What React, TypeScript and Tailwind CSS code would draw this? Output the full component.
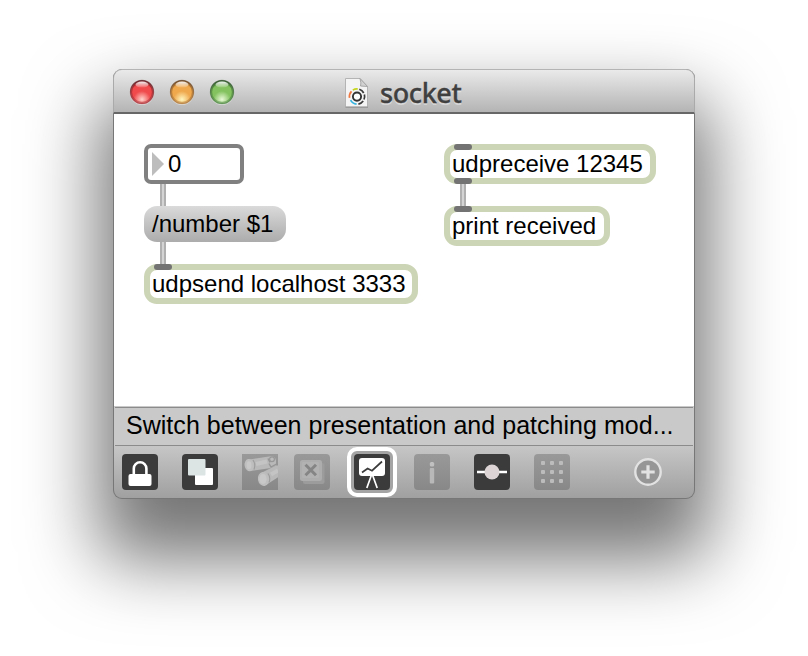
import type { ReactNode } from "react";

function Light({ id, dark, mid, light, rim }: { id: string; dark: string; mid: string; light: string; rim: string }) {
  return (
    <svg className="size-[26px]" viewBox="0 0 26 26">
      <defs>
        <radialGradient id={id} cx=".5" cy=".84" r=".8">
          <stop offset="0" stopColor={light} />
          <stop offset=".48" stopColor={mid} />
          <stop offset=".8" stopColor={mid} />
          <stop offset="1" stopColor={dark} />
        </radialGradient>
        <linearGradient id={id + "Shine"} x1="0" y1="0" x2="0" y2="1">
          <stop offset="0" stopColor="#fff" stopOpacity=".95" />
          <stop offset="1" stopColor="#fff" stopOpacity=".1" />
        </linearGradient>
        <linearGradient id={id + "Rim"} x1="0" y1="0" x2="0" y2="1">
          <stop offset="0" stopColor={rim} />
          <stop offset="1" stopColor={dark} />
        </linearGradient>
      </defs>
      <circle cx="13" cy="14" r="12" fill="#e4e4e4" opacity=".8" />
      <circle cx="13" cy="13" r="11" fill={"url(#" + id + ")"} stroke={"url(#" + id + "Rim)"} strokeOpacity=".45" strokeWidth="2.4" />
      <circle cx="13" cy="13" r="11.4" fill="none" stroke={"url(#" + id + "Rim)"} strokeOpacity=".7" strokeWidth="1.1" />
      <ellipse cx="13" cy="5.6" rx="6.4" ry="3" fill={"url(#" + id + "Shine)"} />
    </svg>
  );
}

function DocumentIcon() {
  return (
    <svg className="h-[32px] w-[24px]" viewBox="0 0 24 32">
      <path d="M.5 1.5H15l7.5 8v20.5H.5z" fill="#f4f4f4" stroke="#b4b4b4" />
      <path d="M.5 30.2h22.5" stroke="#8e8e8e" />
      <path d="M15 1.5q1.5 5 .5 7.5l7 .5z" fill="#d2d2d2" stroke="#a0a0a0" strokeWidth=".9" />
      <circle cx="12" cy="19.6" r="4.1" fill="#fff" stroke="#333" strokeWidth="1.9" />
      <g fill="none" strokeWidth="1.7">
        <path d="M7.8 13.1a7.6 7.6 0 0 1 5-1.1" stroke="#c4d51c" />
        <path d="M14.3 12.3a7.6 7.6 0 0 1 4.4 3.7M19.4 17.5a7.6 7.6 0 0 1-.4 5M18.2 24a7.6 7.6 0 0 1-4.8 3.1" stroke="#3a3a3a" />
        <path d="M11.6 27.2a7.6 7.6 0 0 1-6-4" stroke="#34b4e0" />
        <path d="M4.5 20.9a7.6 7.6 0 0 1 2-6.6" stroke="#f07840" />
      </g>
    </svg>
  );
}

function ObjectBox({ className, children, outlet }: { className: string; children: ReactNode; outlet?: boolean }) {
  return (
    <div className={"absolute h-[40px] rounded-[13px] border-6 border-[#ccd5b5] bg-white pl-[2px] leading-[28px] " + className}>
      <i className="absolute -top-[6px] left-[4px] h-[6px] w-[18px] rounded-[3px] bg-[#737373]" />
      {children}
      {outlet && <i className="absolute -bottom-[6px] left-[4px] h-[6px] w-[18px] rounded-[3px] bg-[#737373]" />}
    </div>
  );
}

function Cord({ className }: { className: string }) {
  return <div className={"absolute w-[6px] border-x-2 border-[#b0b0b0] bg-[#d4d4d4] " + className} />;
}

function Tile({ className, children }: { className: string; children: ReactNode }) {
  return (
    <button className={"size-[36px] shrink-0 overflow-hidden rounded-[4px] " + className}>
      <svg className="size-[36px]" viewBox="0 0 36 36" fill="none">{children}</svg>
    </button>
  );
}

const active = "bg-[#3b3b3b]";
const muted = "bg-linear-to-b from-[#999] to-[#888]";

export default function App() {
  return (
    <div className="h-[656px] w-[808px] overflow-hidden bg-white pt-[69px] pl-[113px] font-['Liberation_Sans',Arial,sans-serif] text-[24px] text-black">
      <div className="flex h-[430px] w-[582px] flex-col rounded-t-[9px] rounded-b-[9px] bg-[#777] p-px shadow-[0_46px_72px_15px_rgba(0,0,0,0.54)]">
        <header className="-mx-px -mt-px flex h-[45px] shrink-0 items-center rounded-t-[9px] border-x border-t border-b-2 border-x-[#aaa] border-t-[#b4b4b4] border-b-[#676767] bg-linear-to-b from-[#eaeaea] to-[#b4b4b4] pl-[15px]">
          <div className="flex gap-[14px] pt-[1px]">
            <Light id="red" dark="#b02a30" mid="#f04a4c" light="#ffd4cd" rim="#551016" />
            <Light id="amber" dark="#b4762e" mid="#efa84c" light="#fff6be" rim="#603814" />
            <Light id="green" dark="#4a883c" mid="#83c25f" light="#eaf9d8" rim="#22481c" />
          </div>
          <div className="ml-[110px] flex items-center">
            <div className="pt-[3px]">
              <DocumentIcon />
            </div>
            <h1 className="ml-[11px] pt-[3px] font-['Noto_Sans',sans-serif] text-[27px] leading-[38px] font-medium tracking-[-0.4px] text-[#404040] [-webkit-text-stroke:0.3px_#404040] [text-shadow:0_2px_0_rgba(255,255,255,0.4)]">socket</h1>
          </div>
        </header>

        <main className="relative h-[292px] shrink-0 bg-white">
          <Cord className="top-[70px] left-[46px] h-[22px]" />
          <Cord className="top-[128px] left-[46px] h-[23px]" />
          <Cord className="top-[70px] left-[346px] h-[23px]" />
          <div className="absolute top-[30px] left-[30px] flex h-[40px] w-[100px] items-center rounded-[7px] border-4 border-[#808080] bg-white pl-[4px]">
            <svg className="h-[24px] w-[12px]" viewBox="0 0 12 24"><path d="M0 0l12 12L0 24z" fill="#bdbdbd" /></svg>
            <span className="ml-[4px]">0</span>
          </div>
          <div className="absolute top-[92px] left-[30px] h-[36px] w-[142px] rounded-[13px] bg-linear-to-b from-[#dadada] to-[#acacac] pl-[8px] leading-[36px]">/number $1</div>
          <ObjectBox className="top-[150px] left-[30px] w-[274px]">udpsend localhost 3333</ObjectBox>
          <ObjectBox className="top-[30px] left-[330px] w-[212px]" outlet>udpreceive 12345</ObjectBox>
          <ObjectBox className="top-[92px] left-[330px] w-[166px]">print received</ObjectBox>
        </main>

        <div className="h-[40px] shrink-0 border-t border-[#c9c9c9] bg-[#c9c9c9]">
          <div className="mx-px h-[39px] border-y border-[#8b8b8b] pl-[11px] text-[25px] leading-[35px] tracking-[0.03px] whitespace-nowrap">
            Switch between presentation and patching mod...
          </div>
        </div>

        <footer className="flex h-[52px] shrink-0 items-center rounded-b-[8px] bg-linear-to-b from-[#c6c6c6] to-[#a0a0a0] pl-[8px]">
          <Tile className={active}>
            <rect x="6.5" y="20" width="23" height="12" rx="2" fill="#fff" />
            <path d="M11.8 21v-6.5a6.3 6.3 0 0 1 12.6 0V21" stroke="#fff" strokeWidth="2.6" />
          </Tile>
          <Tile className={"ml-[24px] " + active}>
            <rect x="13" y="14" width="18" height="17" rx="1" fill="#fff" />
            <rect x="6" y="5" width="17.5" height="16.5" rx="1" fill="#dde4e4" />
          </Tile>
          <Tile className={"ml-[24px] rounded-none " + muted}>
            <path d="M7 5.5L27 2.5q6-1 7 4v5l-5 2.5L8 17z" fill="#b9b9b9" />
            <path d="M20 18.5L34 11.5l3 0v11L24 31z" fill="#b9b9b9" />
            <ellipse cx="7.2" cy="11.2" rx="4.6" ry="6.2" fill="#bebebe" transform="rotate(-10 7.2 11.2)" />
            <ellipse cx="21.5" cy="25" rx="5.6" ry="7" fill="#bebebe" transform="rotate(-10 21.5 25)" />
            <ellipse cx="7" cy="11.2" rx="2.4" ry="4" fill="#c8c8c8" />
            <ellipse cx="21" cy="25" rx="3.6" ry="5" fill="#c8c8c8" />
            <path d="M11 6q3 4 1 9.5M26 19.5q3 4 1 9" stroke="#9c9c9c" strokeWidth="1.1" />
            <path d="M14 10l11-2.5M29 20.5l7-4" stroke="#c4c4c4" strokeWidth="4" />
            <circle cx="30" cy="5.2" r="2.4" fill="#bcbcbc" stroke="#979797" strokeWidth="1.2" />
            <path d="M27 9.5l2 3.5 5.5-3M26 4.5l2 4" stroke="#969696" strokeWidth="1.4" />
          </Tile>
          <Tile className={"ml-[16px] " + muted}>
            <rect x="9" y="9" width="21.5" height="21" rx="2" fill="#9c9c9c" />
            <rect x="6" y="6" width="22" height="21" rx="2.5" fill="#adadad" />
            <rect x="8" y="8" width="17" height="16" rx="1" fill="#b2b2b2" />
            <path d="M11.5 10.8l10.5 10.4m0-10.4l-10.5 10.4" stroke="#858585" strokeWidth="3" />
          </Tile>
          <div className="ml-[17px] flex h-[50px] w-[50px] shrink-0 items-center justify-center rounded-[10px] border-4 border-white bg-[#a4a4a4]">
            <Tile className={active}>
              <rect x="5" y="4" width="26" height="18" rx="3" fill="#fff" />
              <path d="M8 18.5l5.6-4 4.4 2.2L28 7.5" stroke="#3b3b3b" strokeWidth="1.7" />
              <path d="M17.3 21.5l-4.5 12.5M18.7 21.5l4.5 12.5" stroke="#fff" strokeWidth="1.7" />
            </Tile>
          </div>
          <Tile className={"ml-[17px] " + muted}>
            <rect x="15.8" y="8" width="4.4" height="4.4" rx="1.5" fill="#c0c0c0" />
            <rect x="15.8" y="14" width="4.4" height="15.5" rx="1" fill="#b8b8b8" />
          </Tile>
          <Tile className={"ml-[24px] " + active}>
            <path d="M3 18h30" stroke="#fff" strokeWidth="2.4" />
            <circle cx="18" cy="18" r="7.5" fill="#ddd5d5" />
          </Tile>
          <Tile className={"ml-[24px] " + muted}>
            {[9, 18, 27].map((y) =>
              [9, 18, 27].map((x) => (
                <rect key={x + "-" + y} x={x - 2} y={y - 2} width="4" height="4" rx="1" fill="#bcbcbc" />
              ))
            )}
          </Tile>
          <svg className="ml-[64px] size-[28px] shrink-0" viewBox="0 0 28 28" fill="none">
            <circle cx="14" cy="14" r="12.7" fill="#969696" stroke="#e2e2e2" strokeWidth="2.4" />
            <path d="M14 7.3v13.4M7.3 14h13.4" stroke="#e2e2e2" strokeWidth="3.2" />
          </svg>
        </footer>
      </div>
    </div>
  );
}
